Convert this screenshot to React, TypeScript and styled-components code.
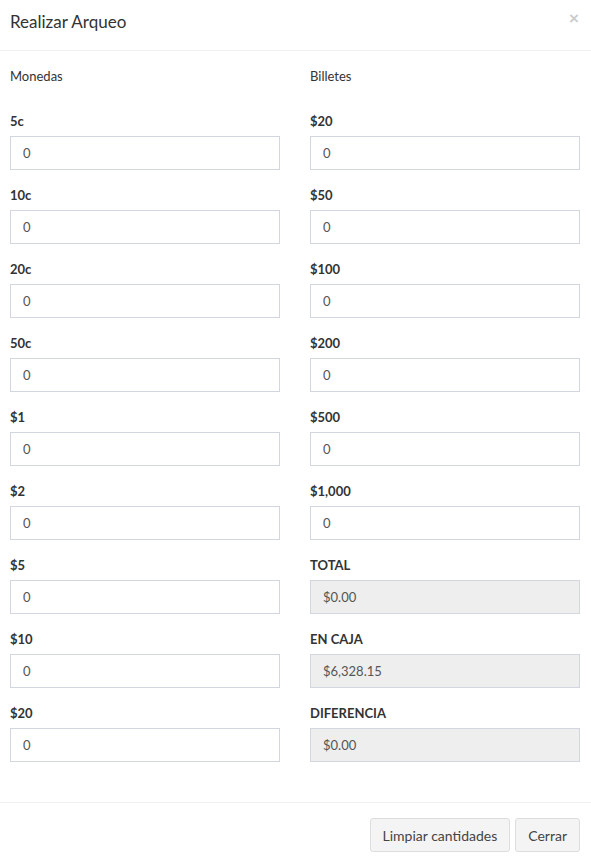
import React from "react";
import styled, { createGlobalStyle } from "styled-components";

const GlobalStyle = createGlobalStyle`
  html, body {
    margin: 0;
    padding: 0;
    background: #ffffff;
  }
  body {
    font-family: "Lato", "Liberation Sans", sans-serif;
    font-size: 14px;
    color: #333333;
  }
  * { box-sizing: border-box; }
`;

const Modal = styled.div`
  width: 591px;
  height: 858px;
  background: #ffffff;
  display: flex;
  flex-direction: column;
`;

const Header = styled.div`
  height: 51px;
  padding: 0 10px;
  border-bottom: 1px solid #f1f1f1;
  display: flex;
  align-items: center;
  justify-content: space-between;
  padding-bottom: 8px;
`;

const Title = styled.h4`
  margin: 0;
  font-size: 17px;
  font-weight: 400;
  color: #333333;
`;

const Close = styled.button`
  border: 0;
  background: none;
  padding: 0;
  margin-top: -6px;
  margin-right: 2px;
  font-size: 17px;
  font-weight: 700;
  line-height: 1;
  color: #000000;
  opacity: 0.2;
  font-family: "Liberation Sans", sans-serif;
`;

const Body = styled.div`
  padding: 15px 11px 25px 10px;
  display: grid;
  grid-template-columns: 270px 270px;
  column-gap: 30px;
  border-bottom: 1px solid #f1f1f1;
`;

const Column = styled.div`
  display: flex;
  flex-direction: column;
`;

const ColumnTitle = styled.p`
  margin: 0 0 25px;
  line-height: 20px;
  font-size: 13px;
`;

const Group = styled.div`
  margin-bottom: 15px;
`;

const Label = styled.label`
  display: block;
  font-weight: 700;
  font-size: 13px;
  line-height: 20px;
  margin-bottom: 5px;
`;

const Input = styled.input<{ $readOnly?: boolean }>`
  display: block;
  width: 100%;
  height: 34px;
  padding: 6px 12px;
  font-family: inherit;
  font-size: 13px;
  color: #555555;
  border: 1px solid #d2d6de;
  border-radius: 0;
  background: ${(p) => (p.$readOnly ? "#eeeeee" : "#ffffff")};
  outline: none;
`;

const Footer = styled.div`
  padding: 15px 11px 0 10px;
  display: flex;
  justify-content: flex-end;
  gap: 5px;
`;

const Button = styled.button`
  height: 34px;
  padding: 6px 12px;
  font-family: inherit;
  font-size: 14px;
  color: #444444;
  background: #f4f4f4;
  border: 1px solid #dddddd;
  border-radius: 3px;
`;

const coins = ["5c", "10c", "20c", "50c", "$1", "$2", "$5", "$10", "$20"];
const bills = ["$20", "$50", "$100", "$200", "$500", "$1,000"];
const totals = [
  { label: "TOTAL", value: "$0.00" },
  { label: "EN CAJA", value: "$6,328.15" },
  { label: "DIFERENCIA", value: "$0.00" },
];

export default function App() {
  return (
    <>
      <GlobalStyle />
      <Modal>
        <Header>
          <Title>Realizar Arqueo</Title>
          <Close aria-label="Cerrar">×</Close>
        </Header>
        <Body>
          <Column>
            <ColumnTitle>Monedas</ColumnTitle>
            {coins.map((c) => (
              <Group key={c}>
                <Label>{c}</Label>
                <Input defaultValue="0" />
              </Group>
            ))}
          </Column>
          <Column>
            <ColumnTitle>Billetes</ColumnTitle>
            {bills.map((b) => (
              <Group key={b}>
                <Label>{b}</Label>
                <Input defaultValue="0" />
              </Group>
            ))}
            {totals.map((t) => (
              <Group key={t.label}>
                <Label>{t.label}</Label>
                <Input $readOnly readOnly value={t.value} />
              </Group>
            ))}
          </Column>
        </Body>
        <Footer>
          <Button>Limpiar cantidades</Button>
          <Button>Cerrar</Button>
        </Footer>
      </Modal>
    </>
  );
}
